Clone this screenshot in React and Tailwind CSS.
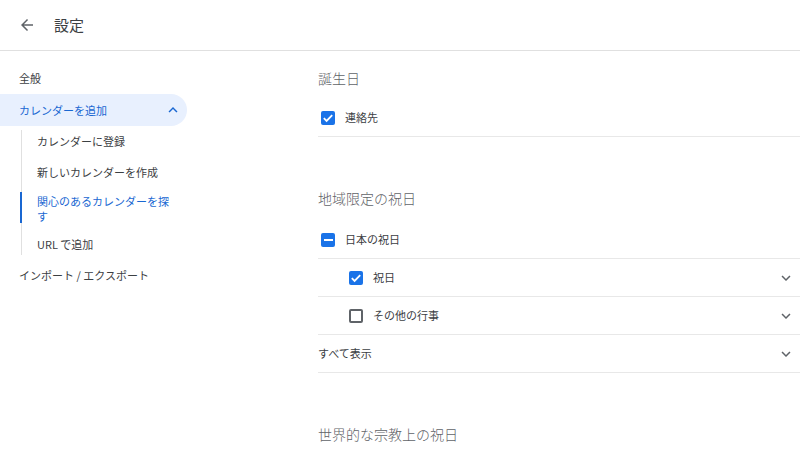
import React from 'react';

const font = { fontFamily: '"Noto Sans CJK JP", "Noto Sans", sans-serif' };

const Chevron = ({ up = false, className = '' }) => (
  <svg viewBox="0 0 24 24" className={`w-[18px] h-[18px] ${className}`} fill="currentColor">
    {up ? (
      <path d="M12 8l-6 6 1.41 1.41L12 10.83l4.59 4.58L18 14z" />
    ) : (
      <path d="M16.59 8.59L12 13.17 7.41 8.59 6 10l6 6 6-6z" />
    )}
  </svg>
);

const Checkbox = ({ state }) => {
  if (state === 'off') {
    return <span className="w-[14px] h-[14px] rounded-[2px] border-2 border-[#5f6368] shrink-0" />;
  }
  return (
    <span className="w-[14px] h-[14px] rounded-[2px] bg-[#1a73e8] shrink-0 flex items-center justify-center">
      {state === 'on' ? (
        <svg viewBox="0 0 14 14" className="w-[14px] h-[14px]" fill="none" stroke="white" strokeWidth="1.8">
          <path d="M2.8 7.2l2.8 2.8 5.6-5.8" />
        </svg>
      ) : (
        <span className="w-[9px] h-[2px] bg-white" />
      )}
    </span>
  );
};

const Row = ({ state, label, indent = false, chevron = false }) => (
  <div className="h-[38px] border-b border-[#e8e8e8] flex items-center pr-[5px]">
    {state ? (
      <div className={`flex items-center gap-[10px] ${indent ? 'pl-[31px]' : 'pl-[3px]'}`}>
        <Checkbox state={state} />
        <span className="text-[11px] text-[#3c4043]">{label}</span>
      </div>
    ) : (
      <span className="text-[11px] text-[#3c4043]">{label}</span>
    )}
    {chevron && <Chevron className="ml-auto text-[#5f6368]" />}
  </div>
);

const SubItem = ({ children, active = false, tall = false }) => (
  <div
    className={`relative pl-[37px] pr-4 flex items-center text-[11px] ${tall ? 'h-[41px] leading-[15px]' : 'h-[31px]'} ${active ? 'text-[#1967d2]' : 'text-[#3c4043]'}`}
  >
    {active && <span className="absolute left-[20px] top-[4px] bottom-[6px] w-[2px] bg-[#1967d2]" />}
    <span className="w-[140px]">{children}</span>
  </div>
);

const Title = ({ children, className = '' }) => (
  <h2 className={`text-[14px] leading-[20px] font-light text-[#5f6368] ${className}`}>{children}</h2>
);

export default function App() {
  return (
    <div className="w-[800px] h-[450px] bg-white overflow-hidden" style={font}>
      <header className="h-[51px] border-b border-[#e0e0e0] flex items-center">
        <svg viewBox="0 0 24 24" className="w-[18px] h-[18px] ml-[18px] text-[#5f6368]" fill="currentColor">
          <path d="M20 11H7.83l5.59-5.59L12 4l-8 8 8 8 1.41-1.41L7.83 13H20v-2z" />
        </svg>
        <span className="ml-[18px] text-[15px] text-[#3c4043]">設定</span>
      </header>
      <div className="flex">
        <nav className="w-[318px] shrink-0 pt-[11px]">
          <div className="h-[32px] pl-[19px] flex items-center text-[11px] text-[#3c4043]">全般</div>
          <div className="h-[32px] w-[187px] pl-[19px] pr-[5px] flex items-center rounded-r-full bg-[#e8f0fe] text-[11px] text-[#1967d2]">
            カレンダーを追加
            <Chevron up className="ml-auto text-[#1967d2]" />
          </div>
          <div className="relative">
            <span className="absolute left-[21px] top-[4px] bottom-[5px] w-px bg-[#e0e0e0]" />
            <SubItem>カレンダーに登録</SubItem>
            <SubItem>新しいカレンダーを作成</SubItem>
            <SubItem active tall>関心のあるカレンダーを探す</SubItem>
            <SubItem>URL で追加</SubItem>
          </div>
          <div className="h-[31px] pl-[19px] flex items-center text-[11px] text-[#3c4043]">インポート / エクスポート</div>
        </nav>
        <main className="flex-1 pt-[17px]">
          <Title className="mb-[11px]">誕生日</Title>
          <Row state="on" label="連絡先" />
          <Title className="mt-[51px] mb-[13px]">地域限定の祝日</Title>
          <Row state="mixed" label="日本の祝日" />
          <Row state="on" label="祝日" indent chevron />
          <Row state="off" label="その他の行事" indent chevron />
          <Row label="すべて表示" chevron />
          <Title className="mt-[51px]">世界的な宗教上の祝日</Title>
        </main>
      </div>
    </div>
  );
}
